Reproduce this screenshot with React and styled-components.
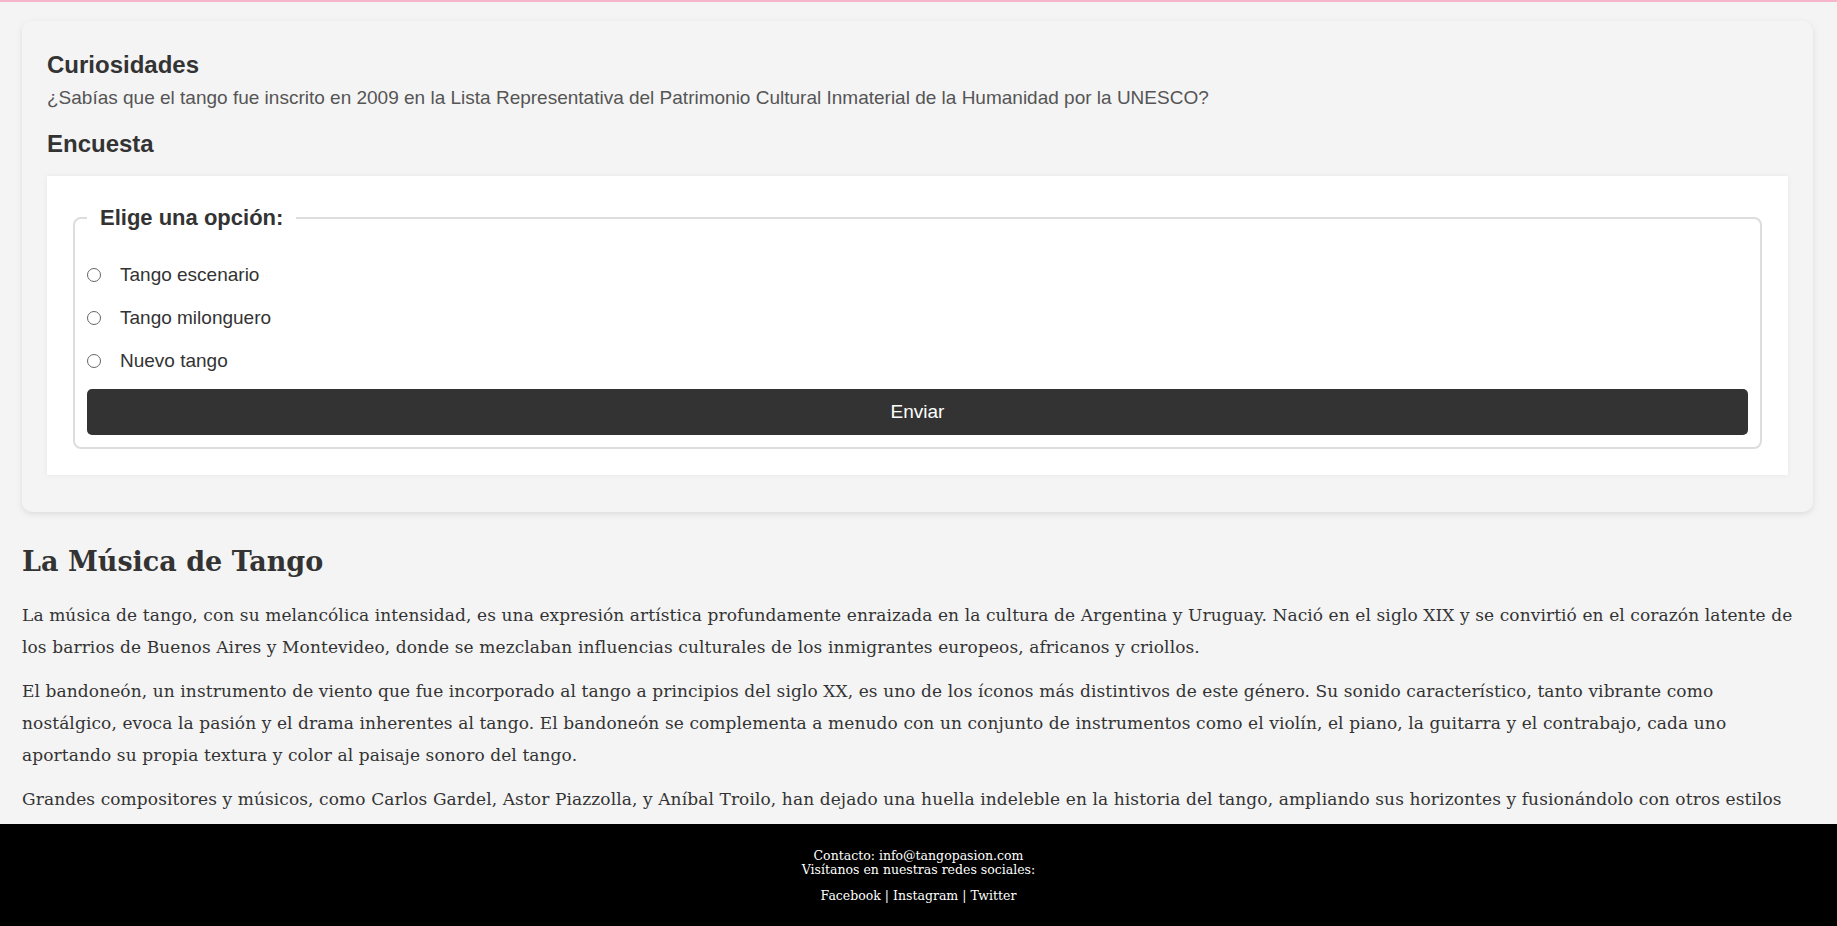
import React from "react";
import styled, { createGlobalStyle } from "styled-components";

const GlobalStyle = createGlobalStyle`
  html, body {
    margin: 0;
    padding: 0;
    background: #f4f4f4;
  }
  body {
    font-family: Georgia, "DejaVu Serif", serif;
    color: #333;
  }
`;

const TopLine = styled.div`
  height: 2px;
  background: #f6b5c8;
`;

const Main = styled.main`
  padding: 0 24px 140px 22px;
`;

const Card = styled.section`
  margin-top: 19px;
  background: #f4f4f4;
  border-radius: 10px;
  box-shadow: 0 2px 6px rgba(0, 0, 0, 0.1);
  padding: 30px 25px 37px;
  font-family: "Liberation Sans", Arial, sans-serif;
`;

const CardTitle = styled.h3`
  margin: ${(p) => (p.$spaced ? "21px 0 18px" : "0 0 8px")};
  font-size: 24px;
  line-height: 28px;
  font-weight: bold;
  color: #333;
`;

const Note = styled.p`
  margin: 0;
  font-size: 19px;
  line-height: 22px;
  color: #555;
`;

const PollBox = styled.div`
  background: #fff;
  box-shadow: 0 0 5px rgba(0, 0, 0, 0.06);
  padding: 29px 26px 26px;
`;

const Fieldset = styled.fieldset`
  margin: 0;
  min-width: 0;
  border: 2px solid #ddd;
  border-radius: 8px;
  padding: 12px 12px 12px;
`;

const Legend = styled.legend`
  padding: 0 13px;
  font-size: 22px;
  line-height: 25px;
  font-weight: bold;
  color: #333;
`;

const OptionList = styled.div`
  display: flex;
  flex-direction: column;
  gap: 21px;
  margin: 22px 0 17px;
`;

const Option = styled.label`
  display: flex;
  align-items: center;
  font-size: 19px;
  line-height: 22px;
  color: #333;
`;

const Radio = styled.input`
  appearance: none;
  box-sizing: border-box;
  width: 14px;
  height: 14px;
  margin: 0 19px 0 0;
  border: 1px solid #666;
  border-radius: 50%;
  background: #fff;
  flex: none;

  &:checked {
    border: 4px solid #0075ff;
  }
`;

const SubmitButton = styled.button`
  display: block;
  width: 100%;
  padding: 12px;
  border: none;
  border-radius: 5px;
  background: #333;
  color: #fff;
  font-family: "Liberation Sans", Arial, sans-serif;
  font-size: 19px;
  line-height: 22px;
  cursor: pointer;
`;

const Article = styled.article`
  margin-top: 32px;
`;

const ArticleTitle = styled.h2`
  margin: 0 0 19px;
  font-size: 27px;
  line-height: 36px;
  font-weight: bold;
  color: #333;
`;

const Paragraph = styled.p`
  margin: 0 0 12px;
  font-size: 17px;
  letter-spacing: 0.1px;
  line-height: 32px;
  color: #333;
`;

const Footer = styled.footer`
  position: fixed;
  left: 0;
  right: 0;
  bottom: 0;
  background: #000;
  color: #fff;
  text-align: center;
  font-family: Georgia, "DejaVu Serif", serif;
  font-size: 12.5px;
  padding: 12px 0 9px;
`;

const FooterText = styled.p`
  margin: ${(p) => (p.$links ? "0 0 14px" : "13px 0 12px")};
  line-height: 14px;
`;

const FooterLink = styled.a`
  color: #fff;
  text-decoration: none;
`;

const options = ["Tango escenario", "Tango milonguero", "Nuevo tango"];

export default function App() {
  return (
    <>
      <GlobalStyle />
      <TopLine />
      <Main>
        <Card>
          <CardTitle>Curiosidades</CardTitle>
          <Note>
            ¿Sabías que el tango fue inscrito en 2009 en la Lista Representativa del
            Patrimonio Cultural Inmaterial de la Humanidad por la UNESCO?
          </Note>
          <CardTitle $spaced>Encuesta</CardTitle>
          <PollBox>
            <form onSubmit={(e) => e.preventDefault()}>
              <Fieldset>
                <Legend>Elige una opción:</Legend>
                <OptionList>
                  {options.map((o) => (
                    <Option key={o}>
                      <Radio type="radio" name="estilo" value={o} />
                      {o}
                    </Option>
                  ))}
                </OptionList>
                <SubmitButton type="submit">Enviar</SubmitButton>
              </Fieldset>
            </form>
          </PollBox>
        </Card>
        <Article>
          <ArticleTitle>La Música de Tango</ArticleTitle>
          <Paragraph>
            La música de tango, con su melancólica intensidad, es una expresión artística
            profundamente enraizada en la cultura de Argentina y Uruguay. Nació en el siglo
            XIX y se convirtió en el corazón latente de los barrios de Buenos Aires y
            Montevideo, donde se mezclaban influencias culturales de los inmigrantes
            europeos, africanos y criollos.
          </Paragraph>
          <Paragraph>
            El bandoneón, un instrumento de viento que fue incorporado al tango a principios
            del siglo XX, es uno de los íconos más distintivos de este género. Su sonido
            característico, tanto vibrante como nostálgico, evoca la pasión y el drama
            inherentes al tango. El bandoneón se complementa a menudo con un conjunto de
            instrumentos como el violín, el piano, la guitarra y el contrabajo, cada uno
            aportando su propia textura y color al paisaje sonoro del tango.
          </Paragraph>
          <Paragraph>
            Grandes compositores y músicos, como Carlos Gardel, Astor Piazzolla, y Aníbal
            Troilo, han dejado una huella indeleble en la historia del tango, ampliando sus
            horizontes y fusionándolo con otros estilos musicales, creando obras que han
            trascendido fronteras y que siguen emocionando a nuevas generaciones de
            oyentes y bailarines en todo el mundo.
          </Paragraph>
        </Article>
      </Main>
      <Footer>
        <FooterText>
          Contacto: info@tangopasion.com
          <br />
          Visítanos en nuestras redes sociales:
        </FooterText>
        <FooterText $links>
          <FooterLink href="#">Facebook</FooterLink> |{" "}
          <FooterLink href="#">Instagram</FooterLink> |{" "}
          <FooterLink href="#">Twitter</FooterLink>
        </FooterText>
      </Footer>
    </>
  );
}
